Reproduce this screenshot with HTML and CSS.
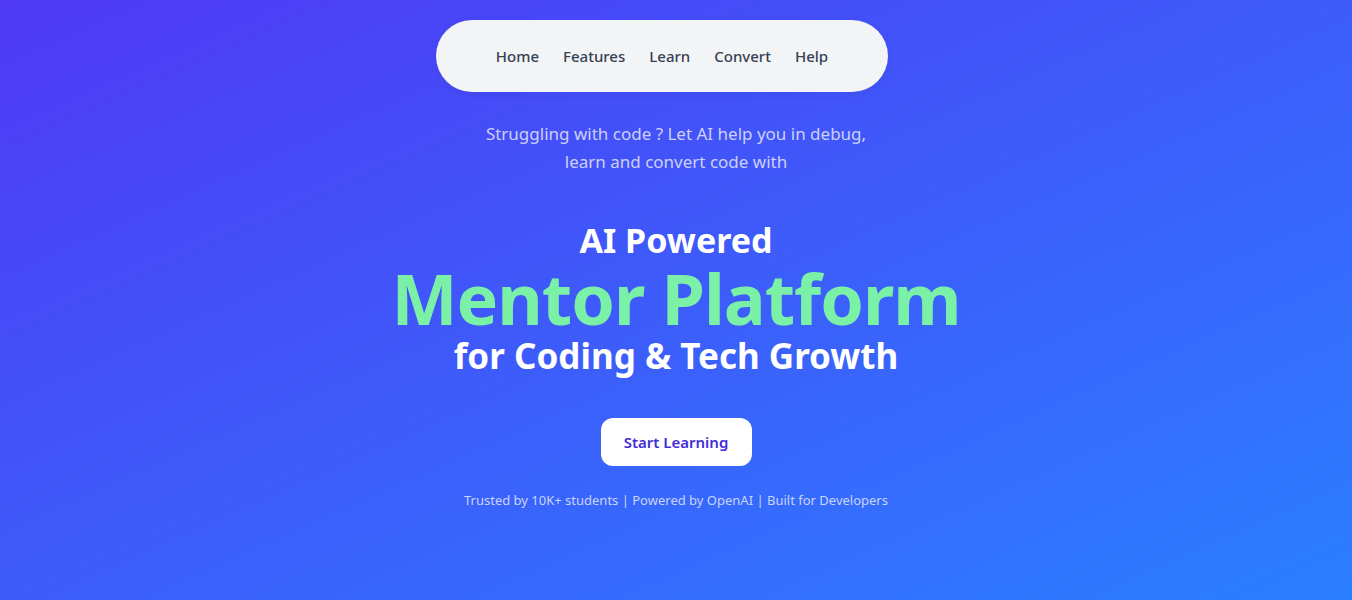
FILE: index.html
```html
<!DOCTYPE html>
<html lang="en">
<head>
<meta charset="utf-8">
<title>AI Mentor Platform</title>
<link rel="stylesheet" href="styles.css">
</head>
<body>
<main class="hero">
  <nav class="nav">
    <a href="#" class="nav-link">Home</a>
    <a href="#" class="nav-link">Features</a>
    <a href="#" class="nav-link">Learn</a>
    <a href="#" class="nav-link">Convert</a>
    <a href="#" class="nav-link">Help</a>
  </nav>
  <p class="intro">Struggling with code ? Let AI help you in debug, learn and convert code with</p>
  <h1 class="title">
    <span class="title-top">AI Powered</span>
    <span class="title-main">Mentor Platform</span>
    <span class="title-sub">for Coding &amp; Tech Growth</span>
  </h1>
  <a href="#" class="cta">Start Learning</a>
  <p class="trust">Trusted by 10K+ students | Powered by OpenAI | Built for Developers</p>
</main>
</body>
</html>
```
FILE: styles.css
```css
* { box-sizing: border-box; }
html, body { margin: 0; padding: 0; height: 100%; }
body {
  font-family: "Noto Sans", "Open Sans", sans-serif;
  background: linear-gradient(to bottom right, #4f39f6, #2b7fff);
  min-height: 600px;
}
.hero {
  display: flex;
  flex-direction: column;
  align-items: center;
  padding-top: 20px;
}
.nav {
  width: 452px;
  height: 72px;
  margin-right: 28px;
  background: #f3f4f6;
  border-radius: 36px;
  display: flex;
  justify-content: center;
  align-items: center;
  gap: 24px;
  box-shadow: 0 2px 8px rgba(0,0,0,0.06);
}
.nav-link {
  color: #364153;
  text-decoration: none;
  font-size: 15px;
  font-weight: 500;
}
.intro {
  margin: 28px 0 0;
  max-width: 400px;
  text-align: center;
  font-size: 17px;
  line-height: 28px;
  color: #cdd0f8;
}
.title {
  margin: 44px 0 0;
  display: flex;
  flex-direction: column;
  align-items: center;
  font-weight: 700;
  text-align: center;
}
.title-top {
  font-size: 34px;
  line-height: 40px;
  color: #ffffff;
}
.title-main {
  font-size: 70px;
  line-height: 76px;
  color: #7bf1a8;
  letter-spacing: -1px;
}
.title-sub {
  font-size: 35px;
  line-height: 40px;
  color: #ffffff;
}
.cta {
  margin-top: 42px;
  width: 151px;
  height: 48px;
  display: flex;
  align-items: center;
  justify-content: center;
  background: #ffffff;
  border-radius: 12px;
  color: #432dd7;
  font-weight: 600;
  font-size: 15px;
  text-decoration: none;
}
.trust {
  margin: 24px 0 0;
  font-size: 13px;
  line-height: 20px;
  color: #c9d3ff;
}
```
